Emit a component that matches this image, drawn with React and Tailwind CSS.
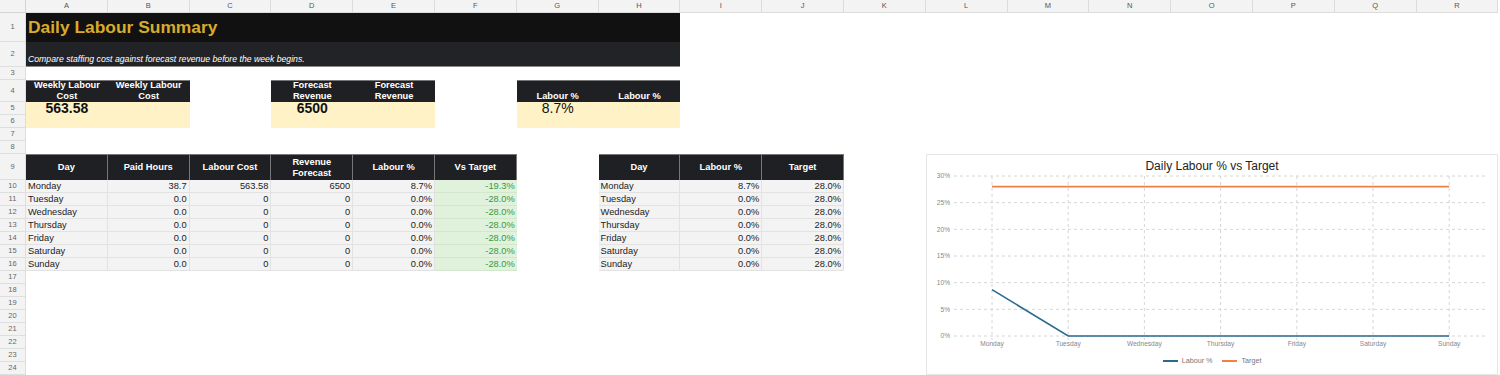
const COLS = ['A', 'B', 'C', 'D', 'E', 'F', 'G', 'H', 'I', 'J', 'K', 'L', 'M', 'N', 'O', 'P', 'Q', 'R']

// grid row n+1 holds sheet row n (row 1 of the grid is the column header bar)
const ROW_START = [
  'row-start-2', 'row-start-3', 'row-start-4', 'row-start-5', 'row-start-6', 'row-start-7',
  'row-start-8', 'row-start-9', 'row-start-10', 'row-start-11', 'row-start-12', 'row-start-13',
  'row-start-14', 'row-start-15', 'row-start-16', 'row-start-17', 'row-start-18', 'row-start-19',
  'row-start-20', 'row-start-21', 'row-start-22', 'row-start-23', 'row-start-24', 'row-start-25',
]

const COL_START = [
  'col-start-2', 'col-start-3', 'col-start-4', 'col-start-5', 'col-start-6', 'col-start-7',
  'col-start-8', 'col-start-9', 'col-start-10', 'col-start-11', 'col-start-12', 'col-start-13',
  'col-start-14', 'col-start-15', 'col-start-16', 'col-start-17', 'col-start-18', 'col-start-19',
]

const days = [
  { day: 'Monday', hours: '38.7', cost: '563.58', rev: '6500', pct: '8.7%', vs: '-19.3%', v: 8.7 },
  { day: 'Tuesday', hours: '0.0', cost: '0', rev: '0', pct: '0.0%', vs: '-28.0%', v: 0 },
  { day: 'Wednesday', hours: '0.0', cost: '0', rev: '0', pct: '0.0%', vs: '-28.0%', v: 0 },
  { day: 'Thursday', hours: '0.0', cost: '0', rev: '0', pct: '0.0%', vs: '-28.0%', v: 0 },
  { day: 'Friday', hours: '0.0', cost: '0', rev: '0', pct: '0.0%', vs: '-28.0%', v: 0 },
  { day: 'Saturday', hours: '0.0', cost: '0', rev: '0', pct: '0.0%', vs: '-28.0%', v: 0 },
  { day: 'Sunday', hours: '0.0', cost: '0', rev: '0', pct: '0.0%', vs: '-28.0%', v: 0 },
]

const headCell =
  'bg-[#1f2023] text-white font-bold text-[9.3px] leading-[11px] text-center flex items-center justify-center border-t border-r border-[#777] px-1'
const dataCell = 'bg-[#f3f3f3] border-b border-r border-[#e2e2e2] text-[9.3px] leading-[12px] text-[#222] px-[2px]'

function KpiCard({ col, label, value, bold }) {
  return (
    <>
      {[0, 1].map((i) => (
        <div
          key={i}
          className={`${COL_START[col + i]} row-start-5 bg-[#1f2023] border-t border-[#777] text-white font-bold text-[9.3px] leading-[11px] text-center flex items-end justify-center px-1`}
        >
          {label}
        </div>
      ))}
      <div className={`${COL_START[col]} col-span-2 row-start-6 row-span-2 bg-[#fff2c6] flex`}>
        <div className={`w-1/2 text-center text-[14px] leading-[12px] text-[#111] ${bold ? 'font-bold' : 'font-normal'}`}>
          {value}
        </div>
      </div>
    </>
  )
}

function Chart() {
  const xs = days.map((_, i) => 65 + i * 76.2)
  const y = (p) => 161 - p * (160 / 30)
  const ticks = [30, 25, 20, 15, 10, 5, 0]
  const labourPts = days.map((d, i) => `${xs[i]},${y(d.v)}`).join(' ')
  return (
    <div className="col-start-13 col-end-20 row-start-10 row-end-26 bg-white border border-[#e6e6e6] flex flex-col">
      <div className="h-[20px] pt-[2px] text-center text-[12px] leading-[18px] text-[#222]">Daily Labour % vs Target</div>
      <svg width="569" height="175" className="block overflow-visible">
        {ticks.map((t) => (
          <g key={t}>
            <line x1="27" x2="560" y1={y(t)} y2={y(t)} stroke="#d6d6d6" strokeWidth="1" strokeDasharray="3 3" />
            <text x="23" y={y(t) + 2.4} textAnchor="end" fontSize="6.6" fill="#888">
              {t}%
            </text>
          </g>
        ))}
        {xs.map((x, i) => (
          <g key={i}>
            <line x1={x} x2={x} y1={y(30)} y2="165" stroke="#d6d6d6" strokeWidth="1" strokeDasharray="3 3" />
            <text x={x} y="171" textAnchor="middle" fontSize="6.6" fill="#888">
              {days[i].day}
            </text>
          </g>
        ))}
        <line x1={xs[0]} x2={xs[6]} y1={y(28)} y2={y(28)} stroke="#f08146" strokeWidth="1.6" />
        <polyline points={labourPts} fill="none" stroke="#2a6a8e" strokeWidth="1.6" />
      </svg>
      <div className="h-[22px] flex items-center justify-center gap-[10px] text-[7.2px] text-[#777]">
        <div className="flex items-center gap-[4px]">
          <span className="w-[15px] h-[2px] bg-[#2a6a8e]" />
          Labour %
        </div>
        <div className="flex items-center gap-[4px]">
          <span className="w-[15px] h-[2px] bg-[#f08146]" />
          Target
        </div>
      </div>
    </div>
  )
}

export default function App() {
  return (
    <div
      className="grid grid-cols-[26px_repeat(18,81.8px)] grid-rows-[13px_29px_25px_13px_22px_13px_13px_13px_13px_26px_repeat(15,13px)] w-[1500px] h-[375px] overflow-hidden bg-white"
      style={{ fontFamily: '"Liberation Sans", Arial, sans-serif' }}
    >
      {/* Column header bar */}
      <div className="col-start-1 row-start-1 bg-[#f3f3f3] border-r border-b border-[#d4d4d4]" />
      {COLS.map((c, i) => (
        <div
          key={c}
          className={`${COL_START[i]} row-start-1 bg-[#f3f3f3] border-r border-b border-[#dcdcdc] text-[7.5px] text-[#555] flex items-center justify-center`}
        >
          {c}
        </div>
      ))}

      {/* Row numbers */}
      {ROW_START.map((r, i) => (
        <div
          key={r}
          className={`col-start-1 ${r} bg-[#f3f3f3] border-r border-b border-[#dedede] text-[7.5px] text-[#666] flex items-center justify-center`}
        >
          {i + 1}
        </div>
      ))}

      {/* Title band */}
      <div className="col-start-2 col-end-10 row-start-2 bg-[#111111] flex items-center px-[2px]">
        <span className="text-[17.4px] font-bold text-[#d9ab2c]">Daily Labour Summary</span>
      </div>
      <div className="col-start-2 col-end-10 row-start-3 bg-[#222327] border-b border-[#888] flex items-end px-[2px] pb-[1px]">
        <span className="text-[8.7px] italic text-white leading-[11px]">
          Compare staffing cost against forecast revenue before the week begins.
        </span>
      </div>

      {/* KPI cards */}
      <KpiCard col={0} label="Weekly Labour Cost" value="563.58" bold />
      <KpiCard col={3} label="Forecast Revenue" value="6500" bold />
      <KpiCard col={6} label="Labour %" value="8.7%" />

      {/* Daily table */}
      {['Day', 'Paid Hours', 'Labour Cost', 'Revenue Forecast', 'Labour %', 'Vs Target'].map((h, i) => (
        <div key={h} className={`${COL_START[i]} row-start-10 ${headCell}`}>
          {h}
        </div>
      ))}
      {days.map((d, r) => (
        <div key={d.day} className={`col-start-2 col-end-8 ${ROW_START[9 + r]} grid grid-cols-6`}>
          <div className={`${dataCell} text-left`}>{d.day}</div>
          <div className={`${dataCell} text-right`}>{d.hours}</div>
          <div className={`${dataCell} text-right`}>{d.cost}</div>
          <div className={`${dataCell} text-right`}>{d.rev}</div>
          <div className={`${dataCell} text-right`}>{d.pct}</div>
          <div className="bg-[#e0f1dc] border-b border-[#d2e8cd] text-[9.3px] leading-[12px] text-[#3a9a42] text-right px-[2px]">
            {d.vs}
          </div>
        </div>
      ))}

      {/* Target table */}
      {['Day', 'Labour %', 'Target'].map((h, i) => (
        <div key={h} className={`${COL_START[7 + i]} row-start-10 ${headCell}`}>
          {h}
        </div>
      ))}
      {days.map((d, r) => (
        <div key={d.day} className={`col-start-9 col-end-12 ${ROW_START[9 + r]} grid grid-cols-3`}>
          <div className={`${dataCell} text-left`}>{d.day}</div>
          <div className={`${dataCell} text-right`}>{d.pct}</div>
          <div className={`${dataCell} text-right`}>28.0%</div>
        </div>
      ))}

      <Chart />
    </div>
  )
}
